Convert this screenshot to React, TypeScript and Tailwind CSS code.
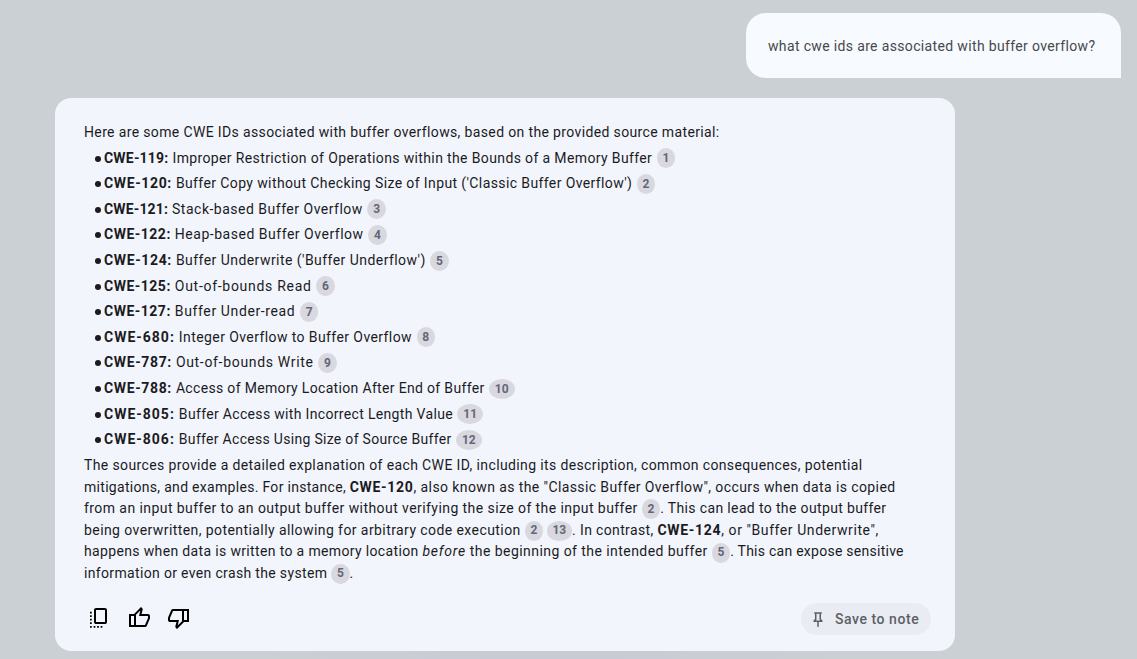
import React from "react";

function Cite({ n }: { n: number }) {
  return (
    <span className={`inline-flex h-5 items-center justify-center rounded-[50%] bg-[#d9d8df] align-middle font-['Roboto'] text-[12px] font-bold tracking-normal text-[#636779] ${n > 9 ? "w-[25.5px]" : "w-[18.5px]"}`}>
      {n}
    </span>
  );
}

const items = [
  { id: "CWE-119:", text: "Improper Restriction of Operations within the Bounds of a Memory Buffer", n: 1, idClass: "tracking-[0.2px]", textClass: "tracking-[0.37px]" },
  { id: "CWE-120:", text: "Buffer Copy without Checking Size of Input ('Classic Buffer Overflow')", n: 2, idClass: "tracking-[0.63px]", textClass: "tracking-[0.39px]" },
  { id: "CWE-121:", text: "Stack-based Buffer Overflow", n: 3, idClass: "tracking-[0.15px]", textClass: "tracking-[0.5px]" },
  { id: "CWE-122:", text: "Heap-based Buffer Overflow", n: 4, idClass: "tracking-[0.5px]", textClass: "tracking-[0.52px]" },
  { id: "CWE-124:", text: "Buffer Underwrite ('Buffer Underflow')", n: 5, idClass: "tracking-[0.63px]", textClass: "tracking-[0.45px]" },
  { id: "CWE-125:", text: "Out-of-bounds Read", n: 6, idClass: "tracking-[0.5px]", textClass: "tracking-[0.71px]" },
  { id: "CWE-127:", text: "Buffer Under-read", n: 7, idClass: "tracking-[0.5px]", textClass: "tracking-[0.62px]" },
  { id: "CWE-680:", text: "Integer Overflow to Buffer Overflow", n: 8, idClass: "tracking-[1px]", textClass: "tracking-[0.41px]" },
  { id: "CWE-787:", text: "Out-of-bounds Write", n: 9, idClass: "tracking-[0.63px]", textClass: "tracking-[0.68px]" },
  { id: "CWE-788:", text: "Access of Memory Location After End of Buffer", n: 10, idClass: "tracking-[0.63px]", textClass: "tracking-[0.33px]" },
  { id: "CWE-805:", text: "Buffer Access with Incorrect Length Value", n: 11, idClass: "tracking-[1px]", textClass: "tracking-[0.33px]" },
  { id: "CWE-806:", text: "Buffer Access Using Size of Source Buffer", n: 12, idClass: "tracking-[1px]", textClass: "tracking-[0.3px]" },
];

function Icon({ d, size }: { d: string; size: number }) {
  return (
    <svg width={size} height={size} viewBox="0 -960 960 960" fill="currentColor">
      <path d={d} />
    </svg>
  );
}

const copy =
  "M360-240q-33 0-56.500-23.500T280-320v-480q0-33 23.500-56.500T360-880h360q33 0 56.500 23.500T800-800v480q0 33-23.500 56.500T720-240H360Zm0-80h360v-480H360v480ZM120-90v-70h70v70h-70Zm0-155v-70h70v70h-70Zm0-140v-70h70v70h-70Zm0-140v-70h70v70h-70Zm0-140v-70h70v70h-70ZM265-90v-70h70v70h-70Zm140 0v-70h70v70h-70Zm140 0v-70h70v70h-70Z";
const up =
  "M720-120H280v-520l280-280 50 50q7 7 11.500 19t4.500 23v14l-44 174h258q32 0 56 24t24 56v80q0 7-2 15t-4 15L794-168q-9 20-30 34t-44 14Zm-360-80h360l120-280v-80H480l54-220-174 174v406ZM280-640v80H160v360h120v80H80v-520h200Z";
const down =
  "M240-840h440v520L400-40l-50-50q-7-7-11.500-19t-4.500-23v-14l44-174H120q-32 0-56-24t-24-56v-80q0-7 2-15t4-15l120-282q9-20 30-34t44-14Zm360 80H240L120-480v80h360l-54 220 174-174v-406ZM680-320v-80h120v-360H680v-80h200v520H680Z";
const pin = "m640-480 80 80v80H520v240l-40 40-40-40v-240H240v-80l80-80v-280h-40v-80h400v80h-40v280Zm-286 80h252l-46-46v-314H400v314l-46 46Z";

export default function App() {
  return (
    <div className="flex h-[659px] flex-col overflow-hidden bg-[#cbd0d4] pt-[13px] font-['Roboto',sans-serif] text-[14px] text-[#1b1b1f]">
      <div className="mr-4 ml-auto flex h-[65px] w-[375px] shrink-0 items-center rounded-[20px] rounded-br-none bg-[#f7faff] pt-0.5 pl-[22px] tracking-[0.35px] whitespace-nowrap text-[#47484c]">
        what cwe ids are associated with buffer overflow?
      </div>
      <main className="mt-5 ml-[55px] h-[553px] w-[900px] shrink-0 rounded-[16px] bg-[#f2f5fb] pt-[23px] pl-[29px] whitespace-nowrap">
        <p className="h-[24.4px] leading-[22px] tracking-[0.36px]">Here are some CWE IDs associated with buffer overflows, based on the provided source material:</p>
        <ul className="h-[309.6px]">
          {items.map((it) => (
            <li key={it.id} className="flex h-[25.6px] items-center pl-[11px]">
              <span className="mt-px mr-[3px] size-[6px] rounded-full bg-[#1b1b1f]" />
              <b className={`mr-1 ${it.idClass}`}>{it.id}</b>
              <span className={`mr-[4.5px] ${it.textClass}`}>{it.text}</span>
              <Cite n={it.n} />
            </li>
          ))}
        </ul>
        <div className="leading-[21.6px]">
          <p className="h-[21.6px] tracking-[0.372px]">The sources provide a detailed explanation of each CWE ID, including its description, common consequences, potential</p>
          <p className="h-[21.6px]">
            <span className="tracking-[0.3px]">mitigations, and examples. For instance, </span>
            <b className="tracking-[0.7px]">CWE-120</b>
            <span className="tracking-[0.4px]">, also known as the "Classic Buffer Overflow", occurs when data is copied</span>
          </p>
          <p className="h-[21.6px]">
            <span className="tracking-[0.43px]">from an input buffer to an output buffer without verifying the size of the input buffer </span>
            <Cite n={2} />
            <span className="tracking-[0.36px]">. This can lead to the output buffer</span>
          </p>
          <p className="h-[21.6px]">
            <span className="tracking-[0.42px]">being overwritten, potentially allowing for arbitrary code execution </span>
            <Cite n={2} /> <Cite n={13} />
            <span className="tracking-[0.36px]">. In contrast, </span>
            <b className="tracking-[0.7px]">CWE-124</b>
            <span className="tracking-[0.57px]">, or "Buffer Underwrite",</span>
          </p>
          <p className="h-[21.6px]">
            <span className="tracking-[0.35px]">happens when data is written to a memory location </span>
            <i className="tracking-[0.75px]">before</i>
            <span className="tracking-[0.44px]"> the beginning of the intended buffer </span>
            <Cite n={5} />
            <span className="tracking-[0.26px]">. This can expose sensitive</span>
          </p>
          <p className="h-[21.6px]">
            <span className="tracking-[0.34px]">information or even crash the system </span>
            <Cite n={5} />.
          </p>
        </div>
        <footer className="mt-[18.4px] mr-6 flex h-8 items-center text-black">
          <div className="-mt-0.5 flex items-center gap-4 pl-[3px]">
            <Icon d={copy} size={24} />
            <Icon d={up} size={24} />
            <Icon d={down} size={24} />
          </div>
          <button className="ml-auto flex h-8 w-[130px] items-center rounded-full bg-[#e9ecf3] pl-2 font-medium tracking-[0.55px] text-[#5d5f64]">
            <Icon d={pin} size={18} />
            <span className="mt-px ml-2">Save to note</span>
          </button>
        </footer>
      </main>
      <div className="ml-[250px] h-2 w-[600px] bg-linear-to-r from-[#cbd0d4] via-[#c8cad4] to-[#cbd0d4]" />
    </div>
  );
}
